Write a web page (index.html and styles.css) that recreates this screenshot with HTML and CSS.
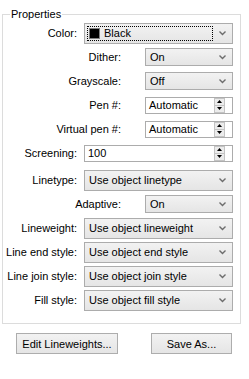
FILE: index.html
```html
<!DOCTYPE html>
<html lang="en">
<head>
  <meta charset="UTF-8" />
  <title>Properties</title>
  <link rel="stylesheet" href="styles.css">
</head>
<body>

  <fieldset class="group">
    <legend>Properties</legend>

    <div class="row">
      <span class="label wide">Color:</span>
      <div class="combo big color focus">
        <div class="focus-box"><span class="swatch"></span>Black</div>
        <svg class="chev" width="7" height="5" viewBox="0 0 7 5"><path d="M0.5 0.5 L3.5 3.5 L6.5 0.5" fill="none" stroke="#6d6d6d" stroke-width="1.4"/></svg>
      </div>
    </div>

    <div class="row">
      <span class="label narrow">Dither:</span>
      <div class="combo small">
        <span>On</span>
        <svg class="chev" width="7" height="5" viewBox="0 0 7 5"><path d="M0.5 0.5 L3.5 3.5 L6.5 0.5" fill="none" stroke="#6d6d6d" stroke-width="1.4"/></svg>
      </div>
    </div>

    <div class="row">
      <span class="label narrow">Grayscale:</span>
      <div class="combo small">
        <span>Off</span>
        <svg class="chev" width="7" height="5" viewBox="0 0 7 5"><path d="M0.5 0.5 L3.5 3.5 L6.5 0.5" fill="none" stroke="#6d6d6d" stroke-width="1.4"/></svg>
      </div>
    </div>

    <div class="row">
      <span class="label narrow">Pen #:</span>
      <div class="spin narrow-ctl">
        <span>Automatic</span>
        <div class="updown">
          <div class="ud"><svg width="5" height="3" viewBox="0 0 5 3"><path d="M2.5 0 L5 3 L0 3 Z" fill="#000"/></svg></div>
          <div class="ud"><svg width="5" height="3" viewBox="0 0 5 3"><path d="M0 0 L5 0 L2.5 3 Z" fill="#000"/></svg></div>
        </div>
      </div>
    </div>

    <div class="row">
      <span class="label narrow">Virtual pen #:</span>
      <div class="spin narrow-ctl">
        <span>Automatic</span>
        <div class="updown">
          <div class="ud"><svg width="5" height="3" viewBox="0 0 5 3"><path d="M2.5 0 L5 3 L0 3 Z" fill="#000"/></svg></div>
          <div class="ud"><svg width="5" height="3" viewBox="0 0 5 3"><path d="M0 0 L5 0 L2.5 3 Z" fill="#000"/></svg></div>
        </div>
      </div>
    </div>

    <div class="row">
      <span class="label wide">Screening:</span>
      <div class="spin wide-ctl">
        <span>100</span>
        <div class="updown">
          <div class="ud"><svg width="5" height="3" viewBox="0 0 5 3"><path d="M2.5 0 L5 3 L0 3 Z" fill="#000"/></svg></div>
          <div class="ud"><svg width="5" height="3" viewBox="0 0 5 3"><path d="M0 0 L5 0 L2.5 3 Z" fill="#000"/></svg></div>
        </div>
      </div>
    </div>

    <div class="row linetype">
      <span class="label wide">Linetype:</span>
      <div class="combo big">
        <span>Use object linetype</span>
        <svg class="chev" width="7" height="5" viewBox="0 0 7 5"><path d="M0.5 0.5 L3.5 3.5 L6.5 0.5" fill="none" stroke="#6d6d6d" stroke-width="1.4"/></svg>
      </div>
    </div>

    <div class="row">
      <span class="label narrow">Adaptive:</span>
      <div class="combo small">
        <span>On</span>
        <svg class="chev" width="7" height="5" viewBox="0 0 7 5"><path d="M0.5 0.5 L3.5 3.5 L6.5 0.5" fill="none" stroke="#6d6d6d" stroke-width="1.4"/></svg>
      </div>
    </div>

    <div class="row">
      <span class="label wide">Lineweight:</span>
      <div class="combo big">
        <span>Use object lineweight</span>
        <svg class="chev" width="7" height="5" viewBox="0 0 7 5"><path d="M0.5 0.5 L3.5 3.5 L6.5 0.5" fill="none" stroke="#6d6d6d" stroke-width="1.4"/></svg>
      </div>
    </div>

    <div class="row">
      <span class="label wide">Line end style:</span>
      <div class="combo big">
        <span>Use object end style</span>
        <svg class="chev" width="7" height="5" viewBox="0 0 7 5"><path d="M0.5 0.5 L3.5 3.5 L6.5 0.5" fill="none" stroke="#6d6d6d" stroke-width="1.4"/></svg>
      </div>
    </div>

    <div class="row">
      <span class="label wide">Line join style:</span>
      <div class="combo big">
        <span>Use object join style</span>
        <svg class="chev" width="7" height="5" viewBox="0 0 7 5"><path d="M0.5 0.5 L3.5 3.5 L6.5 0.5" fill="none" stroke="#6d6d6d" stroke-width="1.4"/></svg>
      </div>
    </div>

    <div class="row">
      <span class="label wide">Fill style:</span>
      <div class="combo big">
        <span>Use object fill style</span>
        <svg class="chev" width="7" height="5" viewBox="0 0 7 5"><path d="M0.5 0.5 L3.5 3.5 L6.5 0.5" fill="none" stroke="#6d6d6d" stroke-width="1.4"/></svg>
      </div>
    </div>
  </fieldset>

  <div class="buttons">
    <button class="btn edit">Edit Lineweights...</button>
    <button class="btn save">Save As...</button>
  </div>

</body>
</html>
```

FILE: styles.css
```css
body {
  font-family: 'Liberation Sans', Arial, sans-serif;
  font-size: 11px;
  margin: 0;
  padding: 0;
  background: #ffffff;
  color: #000000;
  width: 249px;
  height: 379px;
  overflow: hidden;
}

.group {
  margin: 8px 8px 0 2px;
  padding: 0 0 11px 0;
  border: 1px solid #dcdcdc;
  min-width: 0;
}

.group legend {
  margin-left: 7px;
  padding: 0 1px;
  line-height: 13px;
}

.row {
  display: flex;
  align-items: center;
  height: 24px;
}

.row.linetype {
  margin-top: 3px;
}

.label {
  text-align: right;
  white-space: nowrap;
}

.label.wide {
  width: 74px;
  margin-right: 7px;
}

.label.narrow {
  width: 118px;
  margin-right: 24px;
}

.combo {
  display: flex;
  align-items: center;
  box-sizing: border-box;
  border: 1px solid #acacac;
  background: linear-gradient(#f2f2f2, #e5e5e5);
  padding-left: 4px;
  position: relative;
}

.combo.big {
  width: 149px;
  height: 21px;
}

.combo.small {
  width: 88px;
  height: 18px;
}

.combo .chev {
  position: absolute;
  right: 6px;
  top: 50%;
  margin-top: -2px;
}

.combo.color {
  padding-left: 2px;
}

.focus-box {
  display: flex;
  align-items: center;
  width: 126px;
  height: 15px;
  border: 1px dotted #000;
  box-sizing: border-box;
  padding-left: 1px;
}

.swatch {
  width: 11px;
  height: 11px;
  background: #000;
  border: 1px solid #808080;
  box-sizing: border-box;
  margin-right: 4px;
}

.spin {
  display: flex;
  align-items: center;
  justify-content: space-between;
  box-sizing: border-box;
  height: 17px;
  border: 1px solid #acacac;
  background: #ffffff;
  padding: 0 7px 0 3px;
}

.spin.narrow-ctl {
  width: 88px;
}

.spin.wide-ctl {
  width: 149px;
}

.updown {
  display: flex;
  flex-direction: column;
  width: 11px;
  height: 15px;
}

.ud {
  flex: 1;
  display: flex;
  align-items: center;
  justify-content: center;
  background: #ececec;
  border: 1px solid #c4c4c4;
}

.ud + .ud {
  border-top: none;
}

.buttons {
  display: flex;
  margin: 9px 0 0 16px;
  gap: 33px;
}

.btn {
  font-family: 'Liberation Sans', Arial, sans-serif;
  font-size: 11px;
  height: 21px;
  border: 1px solid #adadad;
  background: linear-gradient(#f2f2f2, #e5e5e5);
  color: #000;
  padding: 0;
}

.btn.edit {
  width: 102px;
}

.btn.save {
  width: 81px;
}
```
